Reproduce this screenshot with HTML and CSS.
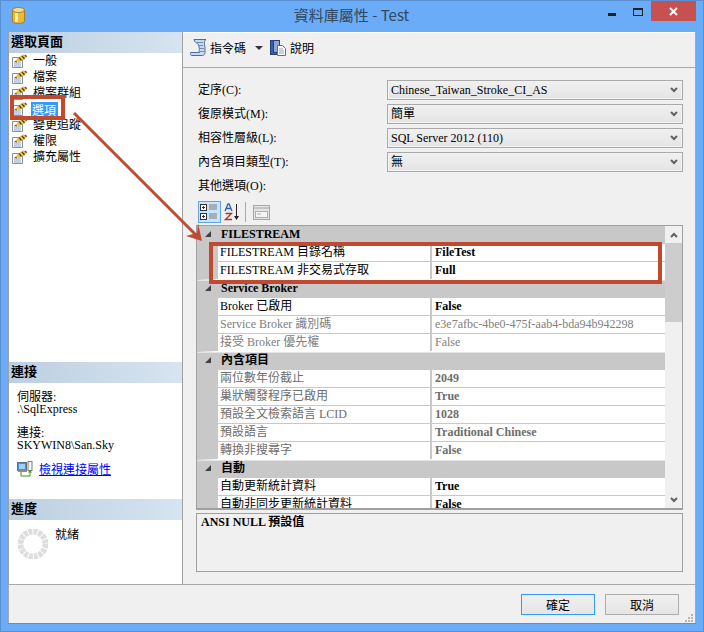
FILE: index.html
```html
<!DOCTYPE html>
<html lang="zh-Hant">
<head>
<meta charset="utf-8">
<title>資料庫屬性 - Test</title>
<link rel="stylesheet" href="styles.css">
</head>
<body>
<svg class="defs" width="0" height="0" aria-hidden="true">
  <symbol id="page" viewBox="0 0 16 14">
    <path d="M.5 3.500h10v10h-10z" fill="#fff" stroke="#8f8f8f"/>
    <path d="M2 8h7M2 10h7M2 12h7" stroke="#86a3c8"/>
    <path d="M3 7L7 3L11 .5L15 1L14 4L9 7L5 8z" fill="#f0c24a"/>
    <path d="M7 3.500L9.500 6.500M10 2L12.500 5M13 1L14.500 3" stroke="#4e4426" stroke-width="1.200"/>
    <path d="M3 7.500L5 8" stroke="#555"/>
  </symbol>
  <symbol id="tri" viewBox="0 0 6 6">
    <path d="M0 6L6 0V6Z" fill="#404040"/>
  </symbol>
  <symbol id="chev" viewBox="0 0 8 6">
    <path d="M1 1L4 4L7 1" fill="none" stroke="#606060" stroke-width="2"/>
  </symbol>
</svg>
<div class="window">
  <header class="titlebar">
    <svg class="appicon" width="13" height="17" viewBox="0 0 13 17">
      <path d="M.5 3v11c0 3.300 12 3.300 12 0V3z" fill="#e9b93a" stroke="#a87f1c"/>
      <rect x="3" y="4" width="3" height="11" fill="#fbe9a8"/>
      <ellipse cx="6.500" cy="3" rx="6" ry="2.500" fill="#f6dd8c" stroke="#a87f1c"/>
    </svg>
    <div class="titletext">資料庫屬性 - Test</div>
    <div class="winbtns">
      <span class="wmin"></span>
      <span class="wmax"></span>
      <span class="wclose">
        <svg width="9" height="9" viewBox="0 0 9 9"><path d="M1 1L8 8M8 1L1 8" stroke="#fff" stroke-width="2"/></svg>
      </span>
    </div>
  </header>
  <div class="content">
    <div class="main">
      <aside class="side">
        <div class="sidehead">選取頁面</div>
        <ul class="pages">
          <li><svg class="pico"><use href="#page"/></svg><span>一般</span></li>
          <li><svg class="pico"><use href="#page"/></svg><span>檔案</span></li>
          <li><svg class="pico"><use href="#page"/></svg><span>檔案群組</span></li>
          <li><svg class="pico"><use href="#page"/></svg><span class="sel">選項</span></li>
          <li><svg class="pico"><use href="#page"/></svg><span>變更追蹤</span></li>
          <li><svg class="pico"><use href="#page"/></svg><span>權限</span></li>
          <li><svg class="pico"><use href="#page"/></svg><span>擴充屬性</span></li>
        </ul>
        <div class="sidehead">連接</div>
        <div class="conn">
          <div class="line">伺服器:</div>
          <div class="line">.\SqlExpress</div>
          <div class="line blank"></div>
          <div class="line">連接:</div>
          <div class="line">SKYWIN8\San.Sky</div>
          <div class="connlink">
            <svg width="16" height="16" viewBox="0 0 16 16">
              <rect x=".5" y="1.500" width="9" height="8" fill="#3f8fe8" stroke="#5f6f8a"/>
              <rect x="2" y="3" width="6" height="5" fill="#9fd0fa"/>
              <rect x="11" y=".5" width="4" height="9" fill="#f4f4f4" stroke="#7f7f7f"/>
              <path d="M1 10h9" stroke="#8c8c8c" stroke-width="2"/>
              <path d="M4 11v4h9v-4" fill="none" stroke="#3f9a0a"/>
              <path d="M11 11.500h4L13 9z" fill="#3f9a0a"/>
            </svg>
            <a href="#">檢視連接屬性</a>
          </div>
        </div>
        <div class="sidehead">進度</div>
        <div class="prog">
          <svg width="30" height="30" viewBox="0 0 30 30">
            <circle cx="15" cy="15" r="12.500" fill="none" stroke="#dedede" stroke-width="6" stroke-dasharray="4 .91"/>
          </svg>
          <span>就緒</span>
        </div>
      </aside>
      <section class="panel">
        <div class="toolbar">
          <svg width="17" height="17" viewBox="0 0 17 17">
            <path d="M4 .5h12c-1.500 1-2 2.500-1.500 5l.5 3v5c0 1.500-1 3-2.500 3H2c-1.500 0-2-1.500-1.500-3h9c-.5-1-.5-2 0-3l-1-5C7 4 4 3 4 .5z" fill="#c9d9ee" stroke="#4a6c9a"/>
            <path d="M7 3.500h6M8 6.500h5M9 9.500h5M10 12.500h4" stroke="#6f8db5"/>
          </svg>
          <span class="tlabel">指令碼</span>
          <svg class="caret" width="8" height="4" viewBox="0 0 8 4"><path d="M0 0h8L4 4z" fill="#333"/></svg>
          <svg class="helpico" width="16" height="16" viewBox="0 0 16 16">
            <rect x=".5" y=".5" width="9" height="14" fill="#3a5fa8" stroke="#23407a"/>
            <rect x="3.500" y=".5" width="6" height="12" fill="#8aa6d8" stroke="#23407a"/>
            <path d="M7.500 5.500h5l3 3v7h-8z" fill="#fff" stroke="#5b6f92"/>
            <path d="M9 9h4M9 11h5M9 13h5" stroke="#8fa3c4"/>
          </svg>
          <span>說明</span>
        </div>
        <div class="form">
          <div class="frow"><label>定序(C):</label><div class="combo"><span>Chinese_Taiwan_Stroke_CI_AS</span><svg class="chev"><use href="#chev"/></svg></div></div>
          <div class="frow"><label>復原模式(M):</label><div class="combo"><span>簡單</span><svg class="chev"><use href="#chev"/></svg></div></div>
          <div class="frow"><label>相容性層級(L):</label><div class="combo"><span>SQL Server 2012 (110)</span><svg class="chev"><use href="#chev"/></svg></div></div>
          <div class="frow"><label>內含項目類型(T):</label><div class="combo"><span>無</span><svg class="chev"><use href="#chev"/></svg></div></div>
          <div class="other">其他選項(O):</div>
          <div class="gridtools">
            <span class="gbtn on">
              <svg width="19" height="16" viewBox="0 0 19 16">
                <rect x=".5" y=".5" width="6" height="6" fill="#fff" stroke="#333"/><path d="M2 3.500h3M3.500 2v3" stroke="#333"/>
                <rect x=".5" y="9.500" width="6" height="6" fill="#fff" stroke="#333"/><path d="M2 12.500h3M3.500 11v3" stroke="#333"/>
                <path d="M9 1h8M9 3h8M9 5h8M9 10h8M9 12h8M9 14h8" stroke="#7a7a7a"/>
              </svg>
            </span>
            <svg class="azico" width="16" height="18" viewBox="0 0 16 18">
              <path d="M1 8L4 1h1l3 7M2.500 5.500h4" fill="none" stroke="#2f5fb8" stroke-width="1.300"/>
              <path d="M1.500 10.500h6L1.500 16.500h6.500" fill="none" stroke="#a8362a" stroke-width="1.300"/>
              <path d="M12.500 1v14" stroke="#222"/><path d="M10 13h5l-2.500 4z" fill="#222"/>
            </svg>
            <span class="gsep"></span>
            <svg width="17" height="15" viewBox="0 0 17 15">
              <rect x=".5" y=".5" width="16" height="14" fill="#e4e4e4" stroke="#a8a8a8"/>
              <path d="M1 3h15" stroke="#c4c4c4" stroke-width="2"/>
              <rect x="2.500" y="6.500" width="12" height="6" fill="#f4f4f4" stroke="#b0b0b0"/>
              <path d="M4 9h4" stroke="#b0b0b0"/>
            </svg>
          </div>
          <div class="pgrid">
            <div class="pbody">
              <div class="grp"><svg class="tri"><use href="#tri"/></svg><b>FILESTREAM</b></div>
              <div class="prow"><div class="pn">FILESTREAM 目錄名稱</div><div class="pv">FileTest</div></div>
              <div class="prow"><div class="pn">FILESTREAM 非交易式存取</div><div class="pv">Full</div></div>
              <div class="grp"><svg class="tri"><use href="#tri"/></svg><b>Service Broker</b></div>
              <div class="prow"><div class="pn">Broker 已啟用</div><div class="pv">False</div></div>
              <div class="prow dim"><div class="pn">Service Broker 識別碼</div><div class="pv">e3e7afbc-4be0-475f-aab4-bda94b942298</div></div>
              <div class="prow dim"><div class="pn">接受 Broker 優先權</div><div class="pv">False</div></div>
              <div class="grp"><svg class="tri"><use href="#tri"/></svg><b>內含項目</b></div>
              <div class="prow dimb"><div class="pn">兩位數年份截止</div><div class="pv">2049</div></div>
              <div class="prow dimb"><div class="pn">巢狀觸發程序已啟用</div><div class="pv">True</div></div>
              <div class="prow dimb"><div class="pn">預設全文檢索語言 LCID</div><div class="pv">1028</div></div>
              <div class="prow dimb"><div class="pn">預設語言</div><div class="pv">Traditional Chinese</div></div>
              <div class="prow dimb"><div class="pn">轉換非搜尋字</div><div class="pv">False</div></div>
              <div class="grp"><svg class="tri"><use href="#tri"/></svg><b>自動</b></div>
              <div class="prow"><div class="pn">自動更新統計資料</div><div class="pv">True</div></div>
              <div class="prow"><div class="pn">自動非同步更新統計資料</div><div class="pv">False</div></div>
            </div>
            <div class="sbar">
              <div class="sarrow"><svg class="chev flip"><use href="#chev"/></svg></div>
              <div class="sthumb"></div>
              <div class="strack"></div>
              <div class="sarrow"><svg class="chev"><use href="#chev"/></svg></div>
            </div>
          </div>
          <div class="desc"><b>ANSI NULL 預設值</b></div>
        </div>
      </section>
    </div>
    <footer class="foot">
      <button class="btn def" type="button">確定</button>
      <button class="btn" type="button">取消</button>
      <svg class="grip" width="8" height="8" viewBox="0 0 8 8"><path d="M6 0h2v2H6zM3 3h2v2H3zM6 3h2v2H6zM0 6h2v2H0zM3 6h2v2H3zM6 6h2v2H6z" fill="#b4b4b4"/></svg>
    </footer>
  </div>
  <div class="mark m1"></div>
  <div class="mark m2"></div>
  <svg class="arrow" width="704" height="632" viewBox="0 0 704 632">
    <path d="M74 113L197 236" stroke="#bf4b30" stroke-width="3"/>
    <path d="M202 241L186 236L197 233L198 223Z" fill="#bf4b30"/>
  </svg>
</div>
</body>
</html>
```
FILE: styles.css
```css
* { box-sizing: border-box; }
html, body { margin: 0; padding: 0; }
body {
  width: 704px;
  height: 632px;
  overflow: hidden;
  font: 12px/16px "Liberation Serif", "Noto Sans CJK TC", serif;
  color: #000;
  background: #6aacf8;
}
.defs { position: absolute; }
.window {
  position: relative;
  width: 704px;
  height: 632px;
  background: #6aacf8;
  box-shadow: inset 0 0 0 1px #5a8fd0;
  display: flex;
  flex-direction: column;
  padding: 0 8px 9px;
}
.titlebar {
  height: 32px;
  flex: none;
  margin: 0 -8px;
  display: flex;
  align-items: flex-start;
  padding: 1px 7px 0 12px;
}
.appicon { margin-top: 6px; flex: none; }
.titletext {
  flex: 1;
  text-align: center;
  font: 15px/28px "Noto Sans CJK TC", "Noto Sans", sans-serif;
  color: #33475b;
  padding-left: 70px;
}
.winbtns { display: flex; align-items: flex-start; width: 89px; flex: none; }
.wmin { width: 8px; height: 3px; background: #222; margin: 12px 17px 0 0; }
.wmax { width: 10px; height: 8px; border: 1px solid #222; border-top-width: 2px; margin: 7px 8px 0 0; }
.wclose {
  width: 45px;
  height: 20px;
  background: #c75050;
  display: flex;
  align-items: center;
  justify-content: center;
}
.content {
  flex: 1;
  display: flex;
  flex-direction: column;
  background: #f0f0f0;
  min-height: 0;
  box-shadow: 0 1px 0 #5a8fd0;
}
.main { flex: 1; display: flex; min-height: 0; }
.side {
  width: 175px;
  flex: none;
  background: #fff;
  border-left: 1px solid #a0a0a0;
  border-right: 1px solid #a0a0a0;
  display: flex;
  flex-direction: column;
}
.sidehead {
  height: 21px;
  flex: none;
  padding-left: 2px;
  font: bold 13px/17px "Noto Sans CJK TC", sans-serif;
  background: linear-gradient(90deg, #bccfe0, #d7e4f1);
}
.pages { flex: 1; min-height: 0; list-style: none; margin: 0; padding: 0; }
.pages li {
  height: 16px;
  display: flex;
  align-items: center;
  padding-left: 3px;
  font-family: "Noto Sans CJK TC", sans-serif;
}
.pico { width: 16px; height: 14px; margin-right: 4px; flex: none; }
.pages span { padding: 0 1px; line-height: 14px; margin-top: -2px; }
.pages .sel { background: #3399ff; color: #fff; margin-left: -1px; padding: 0 2px 0 1px; line-height: 15px; margin-top: 0; }
.conn { height: 116px; flex: none; padding: 8px 0 0 8px; }
.line { height: 12px; line-height: 12px; }
.connlink { display: flex; align-items: center; height: 16px; margin-top: 10px; gap: 6px; }
.connlink a { color: #0000ff; font-family: "Noto Sans CJK TC", sans-serif; }
.prog { height: 64px; flex: none; display: flex; align-items: flex-start; padding: 9px 0 0 9px; gap: 7px; }
.prog span { margin-top: -3px; font-family: "Noto Sans CJK TC", sans-serif; }
.panel { flex: 1; min-width: 0; display: flex; flex-direction: column; border-right: 1px solid #a8a8a8; }
.toolbar {
  height: 36px;
  flex: none;
  border-top: 1px solid #fff;
  border-bottom: 1px solid #a8a8a8;
  display: flex;
  align-items: center;
  padding: 0 0 5px 7px;
  font-family: "Noto Sans CJK TC", sans-serif;
}
.tlabel { margin-left: 3px; }
.caret { margin-left: 9px; }
.helpico { margin: 0 4px 0 7px; }
.form { flex: 1; padding: 12px 12px 0 13px; min-height: 0; }
.frow { display: flex; align-items: center; height: 20px; margin-bottom: 4px; }
.frow label { width: 191px; padding-left: 2px; flex: none; }
.combo {
  flex: 1;
  height: 20px;
  border: 1px solid #a9a9a9;
  box-shadow: inset 0 0 0 1px #f2f2f2;
  background: linear-gradient(#f1f1f1, #e4e4e4);
  display: flex;
  align-items: center;
  justify-content: space-between;
  padding: 0 4px 0 3px;
}
.chev { width: 8px; height: 6px; flex: none; }
.flip { transform: scaleY(-1); }
.other { padding-left: 2px; margin-top: 6px; height: 16px; }
.gridtools { display: flex; align-items: center; height: 22px; margin-top: 7px; padding-left: 2px; gap: 2px; background: #f0f0f0; }
.gbtn { width: 23px; height: 22px; background: #cce4fb; border: 1px solid #5fa6e6; display: flex; align-items: center; justify-content: center; }
.azico { margin-left: 1px; }
.gsep { width: 1px; height: 20px; background: #a8a8a8; margin: 0 5px 0 3px; }
.pgrid {
  height: 285px;
  margin-top: 2px;
  border: 1px solid #a0a0a0;
  border-bottom-width: 2px;
  display: flex;
  overflow: hidden;
  background: #fff;
}
.pbody { flex: 1; min-width: 0; overflow: hidden; }
.grp {
  height: 18px;
  background: #c8c8c8;
  border-top: 1px solid #e4e4e4;
  display: flex;
  align-items: center;
  padding: 0 0 3px 8px;
  line-height: 14px;
}
.pbody .grp:first-child { border-top-color: #c8c8c8; }
.tri { width: 6px; height: 6px; margin-right: 10px; flex: none; }
.prow {
  height: 18px;
  display: flex;
  background: #fff;
  border-left: 21px solid #c8c8c8;
  border-bottom: 1px solid #c8c8c8;
  line-height: 17px;
}
.prow:has(+ .grp), .prow:last-child { border-bottom-color: #fff; }
.pn { width: 214px; flex: none; padding-left: 2px; border-right: 2px solid #c8c8c8; white-space: nowrap; overflow: hidden; }
.pv { padding-left: 3px; font-weight: bold; white-space: nowrap; }
.dim .pn, .dim .pv { color: #808080; font-weight: normal; }
.dimb .pn, .dimb .pv { color: #6d6d6d; }
.sbar { width: 17px; flex: none; display: flex; flex-direction: column; background: #f0f0f0; }
.sarrow { height: 17px; flex: none; display: flex; align-items: center; justify-content: center; }
.sthumb { height: 79px; flex: none; background: #cdcdcd; }
.strack { flex: 1; }
.desc {
  height: 59px;
  margin-top: 3px;
  border: 1px solid #a0a0a0;
  padding: 0 4px;
  line-height: 16px;
  background: #f0f0f0;
}
.foot {
  position: relative;
  height: 39px;
  flex: none;
  border-top: 1px solid #a8a8a8;
  border-right: 1px solid #a8a8a8;
  border-left: 1px solid #a8a8a8;
  display: flex;
  justify-content: flex-end;
  padding: 9px 16px 0 0;
  gap: 10px;
}
.btn {
  width: 74px;
  height: 21px;
  padding: 0;
  border: 1px solid #acacac;
  background: linear-gradient(#f0f0f0, #e5e5e5);
  font: 12px/17px "Noto Sans CJK TC", sans-serif;
  color: #000;
}
.def { border-color: #3399ff; }
.grip { position: absolute; right: 2px; bottom: 1px; }
.mark { position: absolute; border: 4px solid #c0492f; }
.m1 { left: 10px; top: 95px; width: 55px; height: 25px; }
.m2 { left: 209px; top: 242px; width: 453px; height: 42px; }
.arrow { position: absolute; left: 0; top: 0; pointer-events: none; }
```
